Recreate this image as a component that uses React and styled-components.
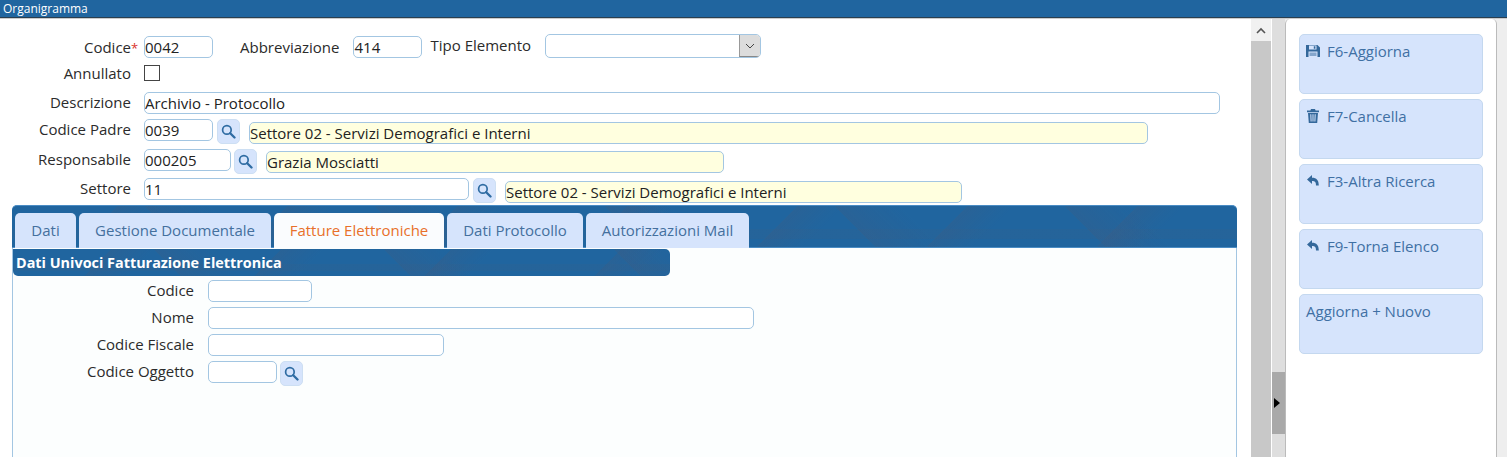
import styled, { createGlobalStyle } from "styled-components"

const Global = createGlobalStyle`
html, body { margin: 0; padding: 0; height: 457px; overflow: hidden; background: #eee; }
body { font-family: "Open Sans", sans-serif; font-size: 15px; color: #2b2b2b; }
`
const shade = "rgba(62,92,130,.3)"
const clear = "rgba(62,92,130,0)"
const blueTexture = `
  linear-gradient(135deg, ${clear} 50%, ${shade} 50%, ${clear} 72%) 0 0 / 170px 100%,
  linear-gradient(45deg, ${clear} 42%, ${shade} 42%, ${clear} 66%) 60px 0 / 230px 100%,
  linear-gradient(0deg, ${clear} 20%, rgba(62,92,130,.16) 20%, rgba(62,92,130,.16) 44%, ${clear} 44%) 40px 0 / 130px 100%,
  #20659f
`
const Page = styled.div`
height: 457px;
display: flex;
flex-direction: column;
overflow: hidden;
`
const TitleBar = styled.div`
height: 17px;
flex: none;
background: #20659f;
border-bottom: 1px solid #2a3f50;
color: #fff;
font-size: 12px;
line-height: 18px;
padding-left: 3px;
`
const Body = styled.div`
flex: 1;
display: flex;
min-height: 0;
border-top: 1px solid #ccc;
`
const Content = styled.div`
width: 1251px;
flex: none;
background: #fff;
padding-top: 17px;
box-sizing: border-box;
overflow: hidden;
`
const Scrollbar = styled.div`
width: 20px;
flex: none;
background: #c8c8c8;
`
const ScrollUp = styled.div`
height: 22px;
background: #f1f1f1;
display: flex;
align-items: center;
justify-content: center;
`
const Splitter = styled.div`
width: 13px;
flex: none;
background: #dedede;
border-left: 1px solid #fff;
display: flex;
align-items: flex-start;
`
const SplitHandle = styled.div`
width: 13px;
height: 62px;
margin-top: 353px;
background: #a9a9a9;
display: flex;
align-items: center;
padding-left: 2px;
box-sizing: border-box;
`
const Arrow = styled.div`
width: 0;
height: 0;
border-style: solid;
border-width: 5px 0 5px 6px;
border-color: transparent transparent transparent #000;
`
const Side = styled.div`
width: 212px;
flex: none;
box-sizing: border-box;
background: #fff;
border-left: 1px solid #bbb;
border-right: 1px solid #bbb;
border-radius: 5px 5px 0 0;
padding: 15px 13px 0 13px;
display: flex;
flex-direction: column;
gap: 5px;
`
const SideButton = styled.div`
height: 60px;
box-sizing: border-box;
background: #d6e4fc;
border: 1px solid #c4d8ef;
border-radius: 5px;
color: #3f70a4;
padding: 6px 6px;
line-height: 21px;
display: flex;
align-items: flex-start;
font-size: 15px;
`
const SideIcon = styled.svg`
width: 14px;
height: 14px;
flex: none;
margin: 3px 7px 0 0;
fill: #34689b;
`
const Row = styled.div`
display: flex;
align-items: flex-start;
height: ${p => p.$h}px;
`
const Label = styled.label`
width: ${p => p.$w || 131}px;
flex: none;
text-align: right;
line-height: 20px;
margin-top: ${p => p.$top || 0}px;
`
const Req = styled.span`
display: inline-block;
width: 7px;
margin-right: -7px;
color: #d8342c;
font-size: 13px;
text-align: left;
`
const Input = styled.input`
display: block;
box-sizing: border-box;
width: ${p => p.$w}px;
height: 22px;
flex: none;
margin: ${p => p.$top || 0}px 0 0 ${p => p.$left ?? 13}px;
padding: 0 0 1px;
border: 1px solid #a3c6e2;
border-radius: 5px;
background: ${p => (p.$ro ? "#ffffdf" : "#fff")};
font: 15px "Open Sans", sans-serif;
color: #222;
outline: none;
`
const Check = styled.span`
display: block;
width: 16px;
height: 16px;
box-sizing: border-box;
margin-left: 13px;
border: 1px solid #444;
`
const Text = styled.span`
flex: none;
line-height: 20px;
margin-left: ${p => p.$left}px;
margin-top: ${p => p.$top || 0}px;
`
const Select = styled.div`
width: 216px;
height: 24px;
box-sizing: border-box;
flex: none;
margin: -2px 0 0 14px;
border: 1px solid #a3c6e2;
border-radius: 5px;
background: #fff;
display: flex;
justify-content: flex-end;
overflow: hidden;
`
const SelectBtn = styled.div`
width: 20px;
background: #dcdcdc;
border-left: 1px solid #999;
border-bottom: 1px solid #888;
display: flex;
align-items: center;
justify-content: center;
`
const SearchBtn = styled.div`
width: 23px;
height: 25px;
flex: none;
box-sizing: border-box;
margin-left: ${p => p.$left || 4}px;
background: #d6e4fc;
border: 1px solid #cddff3;
border-radius: 5px;
display: flex;
align-items: center;
justify-content: center;
`
const TabPanel = styled.div`
margin: 0 0 0 12px;
width: 1225px;
height: 260px;
box-sizing: border-box;
border: 1px solid #a3c6e2;
border-top: none;
border-radius: 5px 5px 0 0;
background: #fcfefe;
`
const TabBar = styled.div`
height: 43px;
box-sizing: border-box;
margin: 0 -1px;
padding: 7px 0 0 3px;
display: flex;
gap: 3px;
align-items: flex-start;
background: ${blueTexture};
border-top: 1px solid #4a8cc4;
border-bottom: 1px solid #4a8cc4;
border-radius: 5px 5px 0 0;
`
const Tab = styled.div`
height: 35px;
box-sizing: border-box;
width: ${p => p.$w}px;
background: ${p => (p.$active ? "#fafcfe" : "#d6e4fc")};
color: ${p => (p.$active ? "#e8702a" : "#44709e")};
border-radius: 5px 5px 0 0;
text-align: center;
line-height: 34px;
font-size: 15px;
`
const SectionTitle = styled.div`
width: 657px;
height: 27px;
box-sizing: border-box;
margin-top: 1px;
padding-left: 3px;
background: ${blueTexture};
border-radius: 0 5px 5px 5px;
color: #fff;
font-weight: 700;
font-size: 14.4px;
line-height: 28px;
`
const SectionForm = styled.div`
padding-top: 4px;
display: flex;
flex-direction: column;
`

function Search({ left }) {
  return (
    <SearchBtn $left={left}>
      <svg width="15" height="15" viewBox="0 0 14 14">
        <circle cx="5.5" cy="5.5" r="4" fill="none" stroke="#2f6ca3" strokeWidth="1.6" />
        <path d="M8.6 8.6l4 4" stroke="#2f6ca3" strokeWidth="2.2" strokeLinecap="round" />
      </svg>
    </SearchBtn>
  )
}

const SaveIcon = () => (
  <SideIcon viewBox="0 0 14 14">
    <path fillRule="evenodd" d="M0 1h11.5L14 3.5V13H0zM3 1.6v3.9h7.5V1.6zM7.8 2.2h1.6v2.6H7.8zM2.5 7.5V13h9V7.5zM3.5 8.7h7v.9h-7zM3.5 10.6h7v.9h-7z" />
  </SideIcon>
)
const TrashIcon = () => (
  <SideIcon viewBox="0 0 14 14">
    <path fillRule="evenodd" d="M5 0h4l.6 1.4H13v1.8H1V1.4h3.4zM2 4h10l-.8 10H2.8zM4.3 5.2l.3 7.4h1l-.3-7.4zM6.5 5.2v7.4h1V5.2zM8.7 5.2l-.3 7.4h1l.3-7.4z" />
  </SideIcon>
)
const BackIcon = () => (
  <SideIcon viewBox="0 0 14 14">
    <path d="M1 5.5L6 1v2.8c4.6 0 6.8 2.6 6.8 7.7H10c0-3.2-1-4.4-4-4.4V10z" />
  </SideIcon>
)

export default function App() {
  return (
    <Page>
      <Global />
      <TitleBar>Organigramma</TitleBar>
      <Body>
        <Content>
          <Row $h={29}>
            <Label $top={1}>Codice<Req>*</Req></Label>
            <Input $w={69} defaultValue="0042" />
            <Text $left={27} $top={1}>Abbreviazione</Text>
            <Input $w={69} $left={14} defaultValue="414" />
            <Text $left={8} $top={-1}>Tipo Elemento</Text>
            <Select>
              <SelectBtn>
                <svg width="10" height="6" viewBox="0 0 10 6"><path d="M1 1l4 4 4-4" fill="none" stroke="#444" strokeWidth="1" /></svg>
              </SelectBtn>
            </Select>
          </Row>
          <Row $h={27}>
            <Label $top={-2}>Annullato</Label>
            <Check />
          </Row>
          <Row $h={27}>
            <Label>Descrizione</Label>
            <Input $w={1076} defaultValue="Archivio - Protocollo" />
          </Row>
          <Row $h={30}>
            <Label>Codice Padre</Label>
            <Input $w={69} defaultValue="0039" />
            <Search />
            <Input $ro $w={899} $left={9} $top={3} defaultValue="Settore 02 - Servizi Demografici e Interni" readOnly />
          </Row>
          <Row $h={29}>
            <Label>Responsabile</Label>
            <Input $w={87} defaultValue="000205" />
            <Search left={3} />
            <Input $ro $w={458} $left={9} $top={2} defaultValue="Grazia Mosciatti" readOnly />
          </Row>
          <Row $h={27}>
            <Label>Settore</Label>
            <Input $w={325} defaultValue="11" />
            <Search />
            <Input $ro $w={457} $left={9} $top={3} defaultValue="Settore 02 - Servizi Demografici e Interni" readOnly />
          </Row>
          <TabPanel>
            <TabBar>
              <Tab $w={61}>Dati</Tab>
              <Tab $w={192}>Gestione Documentale</Tab>
              <Tab $w={170} $active>Fatture Elettroniche</Tab>
              <Tab $w={136}>Dati Protocollo</Tab>
              <Tab $w={163}>Autorizzazioni Mail</Tab>
            </TabBar>
            <SectionTitle>Dati Univoci Fatturazione Elettronica</SectionTitle>
            <SectionForm>
              <Row $h={27}>
                <Label $w={181}>Codice</Label>
                <Input $w={104} $left={14} />
              </Row>
              <Row $h={27}>
                <Label $w={181}>Nome</Label>
                <Input $w={546} $left={14} />
              </Row>
              <Row $h={27}>
                <Label $w={181}>Codice Fiscale</Label>
                <Input $w={236} $left={14} />
              </Row>
              <Row $h={27}>
                <Label $w={181}>Codice Oggetto</Label>
                <Input $w={69} $left={14} />
                <Search left={3} />
              </Row>
            </SectionForm>
          </TabPanel>
        </Content>
        <Scrollbar>
          <ScrollUp>
            <svg width="10" height="7" viewBox="0 0 10 7"><path d="M1 6l4-4 4 4" fill="none" stroke="#555" strokeWidth="1.6" /></svg>
          </ScrollUp>
        </Scrollbar>
        <Splitter>
          <SplitHandle><Arrow /></SplitHandle>
        </Splitter>
        <Side>
          <SideButton><SaveIcon />F6-Aggiorna</SideButton>
          <SideButton><TrashIcon />F7-Cancella</SideButton>
          <SideButton><BackIcon />F3-Altra Ricerca</SideButton>
          <SideButton><BackIcon />F9-Torna Elenco</SideButton>
          <SideButton>Aggiorna + Nuovo</SideButton>
        </Side>
      </Body>
    </Page>
  )
}
